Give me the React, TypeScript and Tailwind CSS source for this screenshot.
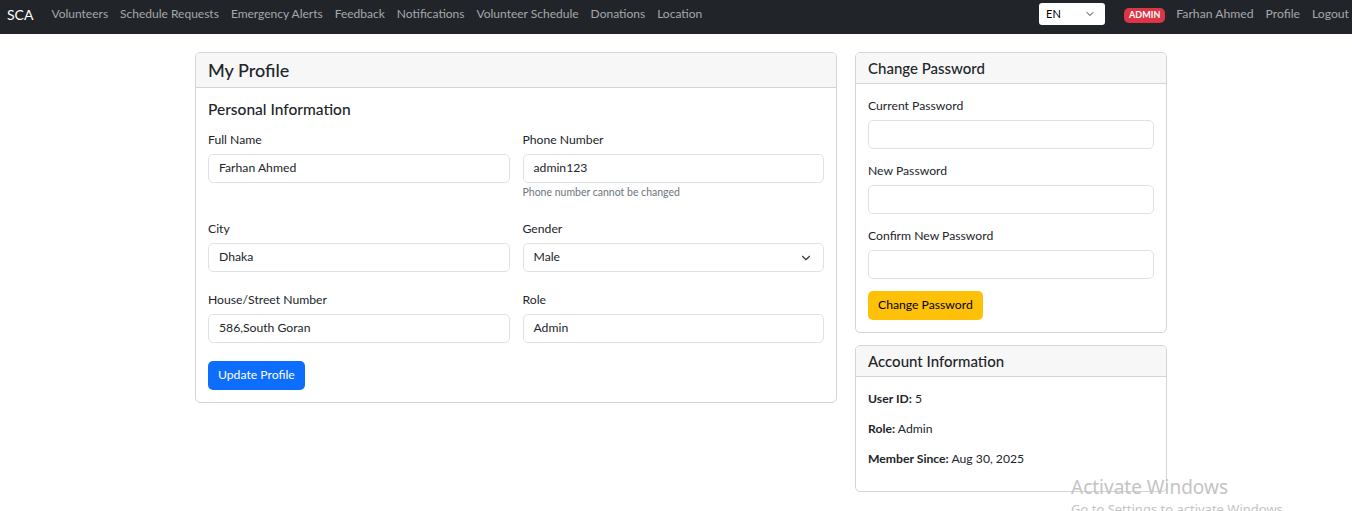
import { ChevronDown } from "lucide-react";

const navLinks = [
  "Volunteers",
  "Schedule Requests",
  "Emergency Alerts",
  "Feedback",
  "Notifications",
  "Volunteer Schedule",
  "Donations",
  "Location",
];

function Field({
  label,
  value,
  help,
  select,
}: {
  label: string;
  value?: string;
  help?: string;
  select?: boolean;
}) {
  return (
    <div className="flex-1">
      <label className="block text-[12.2px] leading-[19px] mb-[5px]">{label}</label>
      <div className="h-[29px] border border-[#dee2e6] rounded-[5px] px-[10px] flex items-center justify-between text-[12.2px] bg-white">
        <span>{value}</span>
        {select && <ChevronDown className="h-[14px] w-[14px] text-[#343a40]" strokeWidth={2} />}
      </div>
      {help && <div className="text-[10.5px] text-[#6c757d] mt-[2px] leading-[15px]">{help}</div>}
    </div>
  );
}

function Card({ title, big, children }: { title: string; big?: boolean; children: React.ReactNode }) {
  return (
    <div className="border border-[#d3d4d5] rounded-[5px] bg-white overflow-hidden">
      <div
        className={`bg-[#f7f7f7] border-b border-[#d3d4d5] px-[12px] flex items-center ${
          big ? "h-[35px] text-[18px]" : "h-[31px] text-[15px]"
        } font-medium`}
      >
        {title}
      </div>
      <div className="p-[12px]">{children}</div>
    </div>
  );
}

export default function App() {
  return (
    <div className="min-h-screen bg-white text-[#212529] relative overflow-hidden" style={{ fontFamily: "Lato, 'Noto Sans', sans-serif" }}>
      {/* Navbar */}
      <nav className="h-[34px] bg-[#212529] flex items-center pl-[7px] pb-[6px]">
        <span className="text-white text-[14px] mr-[12px]">SCA</span>
        <div className="flex items-center">
          {navLinks.map((l) => (
            <span key={l} className="px-[6px] text-[12px] text-[#a6a8aa]">
              {l}
            </span>
          ))}
        </div>
        <div className="ml-auto flex items-center">
          <div className="w-[66px] h-[22px] bg-white rounded-[3px] flex items-center justify-between pl-[7px] pr-[9px] mr-[19px]">
            <span className="text-[11px] text-black">EN</span>
            <ChevronDown className="h-[12px] w-[12px] text-[#333]" strokeWidth={2} />
          </div>
          <span className="bg-[#dc3545] text-white text-[9px] font-bold rounded-[5px] px-[5px] h-[15px] flex items-center mr-[5px] mt-[2px]">
            ADMIN
          </span>
          <span className="px-[6px] text-[12.2px] text-[#a6a8aa]">Farhan Ahmed</span>
          <span className="px-[6px] text-[12.2px] text-[#a6a8aa]">Profile</span>
          <span className="pl-[6px] pr-[3px] text-[12.2px] text-[#a6a8aa]">Logout</span>
        </div>
      </nav>

      {/* Main */}
      <main className="flex gap-[18px] ml-[195px] mt-[18px] items-start">
        <div className="w-[642px]">
          <Card title="My Profile" big>
            <h3 className="text-[15.5px] leading-[19px] font-medium mb-[11px]">Personal Information</h3>
            <div className="flex gap-[13px]">
              <Field label="Full Name" value="Farhan Ahmed" />
              <Field label="Phone Number" value="admin123" help="Phone number cannot be changed" />
            </div>
            <div className="flex gap-[13px] mt-[19px]">
              <Field label="City" value="Dhaka" />
              <Field label="Gender" value="Male" select />
            </div>
            <div className="flex gap-[13px] mt-[18px]">
              <Field label="House/Street Number" value="586,South Goran" />
              <Field label="Role" value="Admin" />
            </div>
            <button className="mt-[18px] h-[29px] px-[10px] bg-[#0d6efd] text-white text-[12.2px] rounded-[5px] block">
              Update Profile
            </button>
          </Card>
        </div>

        <div className="w-[312px] flex flex-col gap-[12px]">
          <Card title="Change Password">
            <div className="flex flex-col gap-[12px]">
              <Field label="Current Password" />
              <Field label="New Password" />
              <Field label="Confirm New Password" />
            </div>
            <button className="mt-[12px] h-[29px] px-[10px] bg-[#ffc107] text-black text-[12.2px] rounded-[5px] block">
              Change Password
            </button>
          </Card>
          <Card title="Account Information">
            <div className="text-[12.2px] leading-[19px] flex flex-col gap-[11px] pb-[11px]">
              <p>
                <b>User ID:</b> 5
              </p>
              <p>
                <b>Role:</b> Admin
              </p>
              <p>
                <b>Member Since:</b> Aug 30, 2025
              </p>
            </div>
          </Card>
        </div>
      </main>

      {/* Windows watermark */}
      <div className="absolute left-[1071px] top-[476px] text-[#c4c4c4] pointer-events-none whitespace-nowrap" style={{ fontFamily: "'Noto Sans', sans-serif" }}>
        <div className="text-[19px] leading-[22px]">Activate Windows</div>
        <div className="text-[13px] leading-[18px] mt-[2px]">Go to Settings to activate Windows.</div>
      </div>
    </div>
  );
}
